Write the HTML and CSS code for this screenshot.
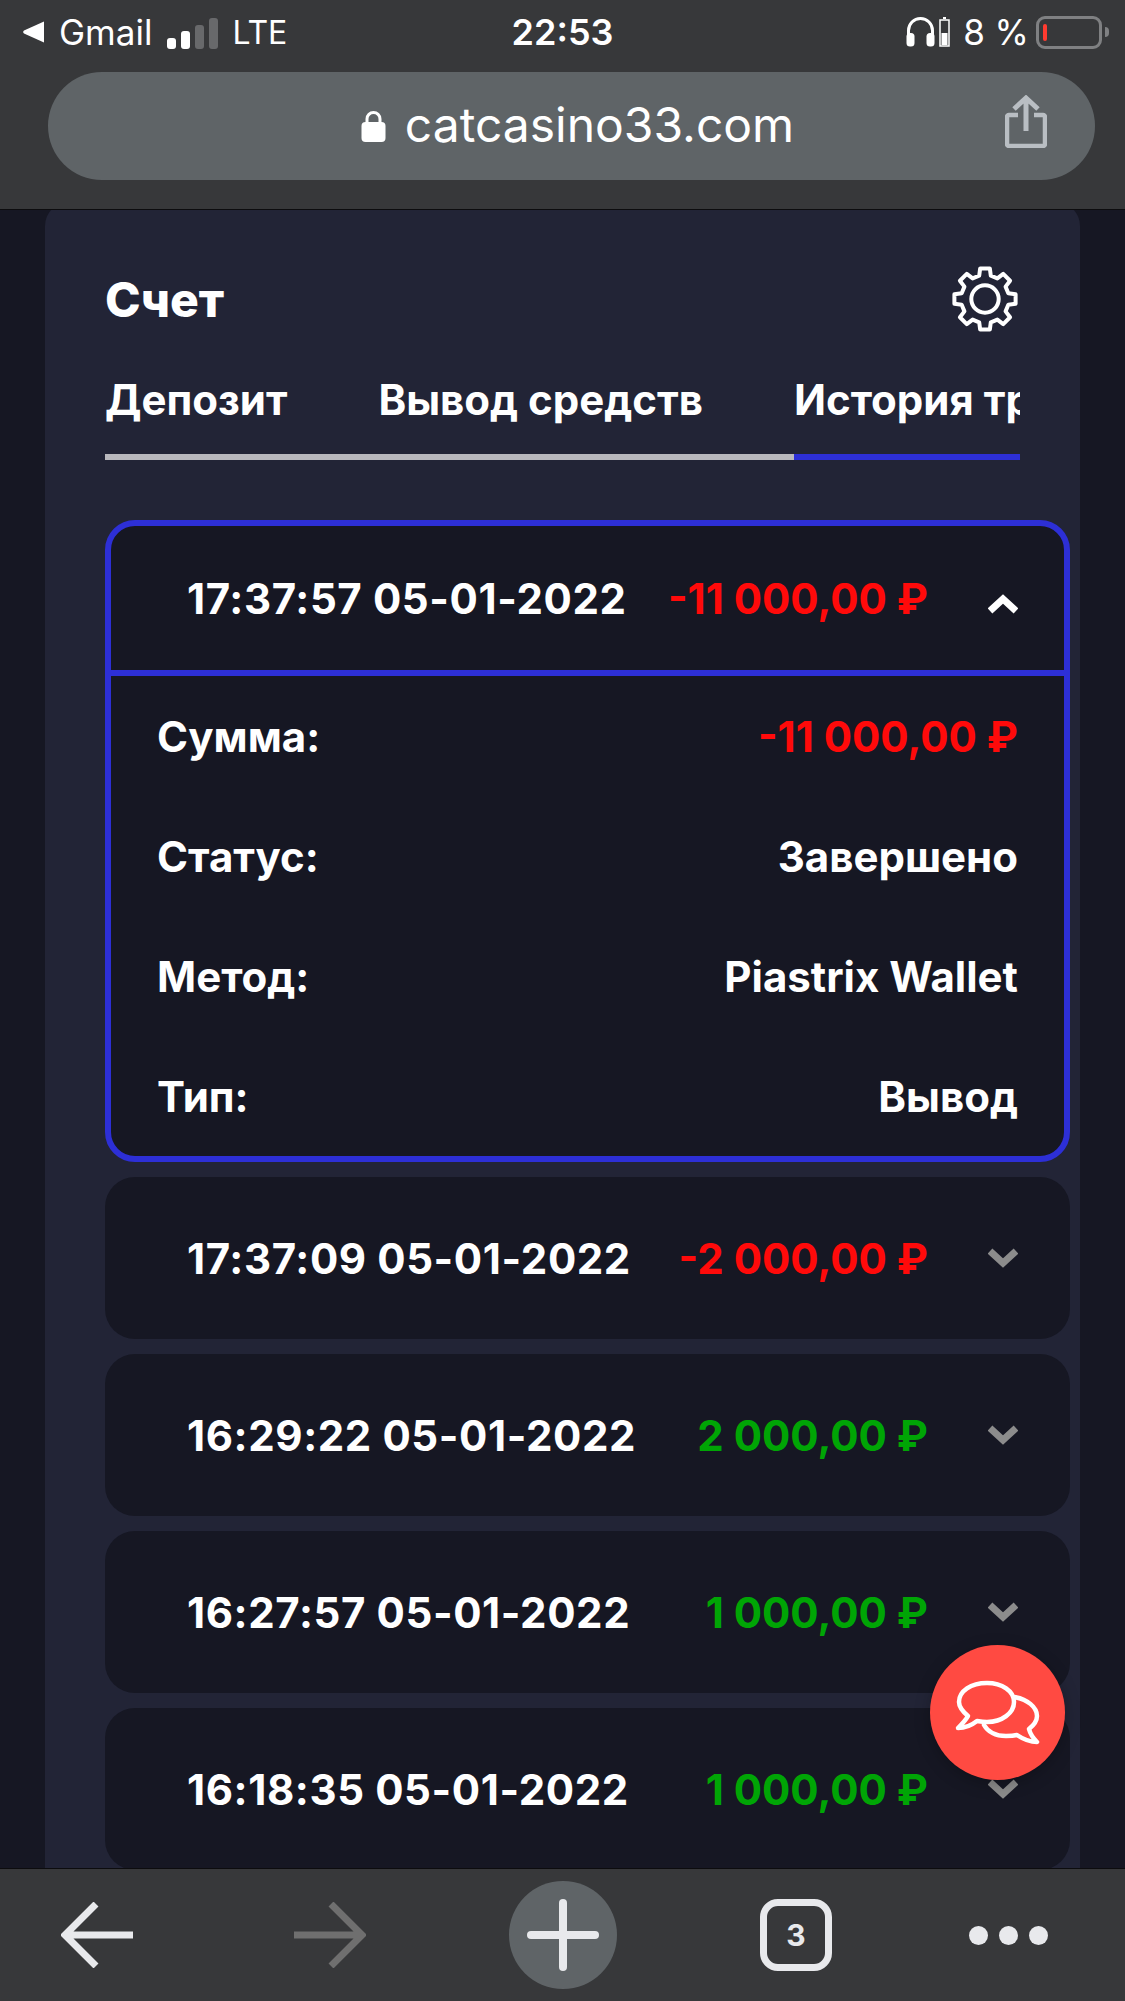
FILE: index.html
```
<!DOCTYPE html>
<html>
<head>
  <meta charset="UTF-8">
  <meta name="viewport" content="width=device-width, initial-scale=1">
  <title>catcasino33.com</title>

  <link rel="stylesheet" href="styles.css">
</head>

<body>

<header class="topbar">
  <div class="status">
    <div class="status__left">
      <svg class="status__back" width="22" height="24" viewBox="0 0 22 24"><path d="M21 1.5v21L1 13.5a2 2 0 0 1 0-3z" fill="#fff"/></svg>
      <span class="status__app">Gmail</span>
      <div class="signal">
        <span class="signal__bar signal__bar--1"></span>
        <span class="signal__bar signal__bar--2"></span>
        <span class="signal__bar signal__bar--3"></span>
        <span class="signal__bar signal__bar--4"></span>
      </div>
      <span class="status__net">LTE</span>
    </div>
    <div class="status__time">22:53</div>
    <div class="status__right">
      <svg width="29" height="30" viewBox="0 0 29 30"><path d="M2.500 21v-7.500a12 12 0 0 1 24 0V21" fill="none" stroke="#fff" stroke-width="3"/><rect x="0.500" y="16" width="8" height="13.500" rx="3.500" fill="#fff"/><rect x="20.500" y="16" width="8" height="13.500" rx="3.500" fill="#fff"/></svg>
      <svg class="status__cell" width="11" height="30" viewBox="0 0 11 30"><path d="M4 0h3v2H4z" fill="#fff"/><rect x="1" y="3" width="9" height="26" fill="none" stroke="#fff" stroke-width="1.500"/><rect x="2.500" y="16" width="6" height="12" fill="#fff"/></svg>
      <span class="status__percent">8 %</span>
      <div class="battery"><span class="battery__level"></span></div>
      <span class="battery__nub"></span>
    </div>
  </div>

  <div class="url">
    <svg width="25" height="32" viewBox="0 0 25 32"><path d="M6 14V9a6.500 6.500 0 0 1 13 0v5" fill="none" stroke="#fff" stroke-width="3"/><rect x="0.500" y="12" width="24" height="20" rx="4" fill="#fff"/></svg>
    <span class="url__text">catcasino33.com</span>
    <svg class="url__share" width="42" height="53" viewBox="0 0 42 53"><path d="M21 36V3M9 14L21 3l12 11" fill="none" stroke="#b9bec3" stroke-width="5"/><path d="M13 20H4a2 2 0 0 0-2 2v27a2 2 0 0 0 2 2h34a2 2 0 0 0 2-2V22a2 2 0 0 0-2-2h-9" fill="none" stroke="#b9bec3" stroke-width="4.500"/></svg>
  </div>
</header>

<main class="page">
  <section class="panel">
    <div class="panel__head">
      <h1 class="title">Счет</h1>
      <svg width="66" height="66" viewBox="0 0 66 66" fill="none" stroke="#fff" stroke-width="4" stroke-linejoin="round"><path d="M27.2 9.700L28.150 2.400H37.850L38.800 9.700L45.360 12.430L51.220 7.920L58.080 14.780L53.570 20.640L56.300 27.200L63.600 28.150V37.850L56.300 38.800L53.570 45.360L58.080 51.220L51.220 58.080L45.360 53.570L38.800 56.300L37.850 63.600H28.150L27.200 56.300L20.640 53.570L14.780 58.080L7.920 51.220L12.430 45.360L9.700 38.800L2.400 37.850V28.150L9.700 27.200L12.430 20.640L7.920 14.780L14.780 7.920L20.640 12.430z"/><circle cx="33" cy="33" r="13.700"/></svg>
    </div>

    <nav class="tabs">
      <a class="tabs__item">Депозит</a>
      <a class="tabs__item">Вывод средств</a>
      <a class="tabs__item tabs__item--active">История транзакций</a>
    </nav>

    <ul class="list">
      <li class="card card--open">
        <div class="card__row card__row--head">
          <span class="card__date">17:37:57 05-01-2022</span>
          <span class="card__sum text-red">-11 000,00 ₽</span>
          <svg class="chevron chevron--up" width="30" height="20" viewBox="0 0 30 20"><path d="M2 17L15 5l13 12" fill="none" stroke="#fff" stroke-width="7"/></svg>
        </div>
        <div class="details">
          <div class="details__row"><span>Сумма:</span><span class="text-red">-11 000,00 ₽</span></div>
          <div class="details__row"><span>Статус:</span><span>Завершено</span></div>
          <div class="details__row"><span>Метод:</span><span>Piastrix Wallet</span></div>
          <div class="details__row"><span>Тип:</span><span>Вывод</span></div>
        </div>
      </li>

      <li class="card">
        <div class="card__row">
          <span class="card__date">17:37:09 05-01-2022</span>
          <span class="card__sum text-red">-2 000,00 ₽</span>
          <svg class="chevron" width="30" height="20" viewBox="0 0 30 20"><path d="M2 3l13 12L28 3" fill="none" stroke="#8c8c8c" stroke-width="7"/></svg>
        </div>
      </li>
      <li class="card">
        <div class="card__row">
          <span class="card__date">16:29:22 05-01-2022</span>
          <span class="card__sum text-green">2 000,00 ₽</span>
          <svg class="chevron" width="30" height="20" viewBox="0 0 30 20"><path d="M2 3l13 12L28 3" fill="none" stroke="#8c8c8c" stroke-width="7"/></svg>
        </div>
      </li>
      <li class="card">
        <div class="card__row">
          <span class="card__date">16:27:57 05-01-2022</span>
          <span class="card__sum text-green">1 000,00 ₽</span>
          <svg class="chevron" width="30" height="20" viewBox="0 0 30 20"><path d="M2 3l13 12L28 3" fill="none" stroke="#8c8c8c" stroke-width="7"/></svg>
        </div>
      </li>
      <li class="card">
        <div class="card__row">
          <span class="card__date">16:18:35 05-01-2022</span>
          <span class="card__sum text-green">1 000,00 ₽</span>
          <svg class="chevron" width="30" height="20" viewBox="0 0 30 20"><path d="M2 3l13 12L28 3" fill="none" stroke="#8c8c8c" stroke-width="7"/></svg>
        </div>
      </li>
    </ul>
  </section>
</main>

<a class="chat">
  <svg width="135" height="135" viewBox="0 0 135 135" fill="none" stroke="#fff" stroke-width="4.500" stroke-linejoin="round" stroke-linecap="round">
    <path d="M38 71C31 65 29 60 29 57C29 46 41 38 57 38C72 38 84 46 84 57C84 68 72 77 57 77C53 77 50 76.500 47 76C42 80 35 83 28 83C32 79 36 75 38 71Z"/>
    <path d="M84 52C97 54 107 62 107 71C107 76 104 80 99 84C100 88 103 93 107 97C100 97 93 94 87 90C83 91 79 91 76 91C66 91 58 87 54 80"/>
  </svg>
</a>

<footer class="toolbar">
  <svg width="72" height="66" viewBox="0 0 72 66" fill="none" stroke="#e8e9ec" stroke-width="7"><path d="M35 2L4 33l31 31M5 33h67"/></svg>
  <svg class="toolbar__forward" width="72" height="66" viewBox="0 0 72 66" fill="none" stroke="#6f6f6f" stroke-width="7"><path d="M37 2l31 31-31 31M67 33H0"/></svg>
  <div class="toolbar__plus">
    <svg width="72" height="72" viewBox="0 0 72 72" fill="#e8e9ec"><rect x="32" y="0" width="8" height="72" rx="4"/><rect x="0" y="32" width="72" height="8" rx="4"/></svg>
  </div>
  <div class="toolbar__tabs">3</div>
  <div class="toolbar__dots"><span></span><span></span><span></span></div>
</footer>

</body>
</html>
```

FILE: styles.css
```
html,
body {
  height: 100%;
}

body {
  position: relative;
  display: flex;
  flex-direction: column;
  overflow: hidden;
  margin: 0;
  font-family: Inter, "Noto Sans", sans-serif;
  color: #fff;
  background-color: #161723;
}

.text-red { color: #ff0a0a; }
.text-green { color: #00a505; }


/* Browser top bar */

.topbar {
  flex: none;
  height: 210px;
  box-sizing: border-box;
  padding: 0 23px 0;
  background-color: #37383a;
  border-bottom: 1px solid #0c0c0e;
}

.status {
  display: grid;
  grid-template-columns: 1fr auto 1fr;
  align-items: center;
  height: 64px;
  margin-bottom: 8px;
}

.status__left,
.status__right {
  display: flex;
  align-items: center;
}

.status__right { justify-content: flex-end; margin-right: -7px; }

.status__back { margin-right: 14px; }

.status__app { font-size: 35px; }

.status__net { font-size: 32px; }

.status__time {
  font-size: 36px;
  font-weight: 600;
}

.signal {
  display: flex;
  align-items: flex-end;
  gap: 5px;
  height: 31px;
  margin: 0 14px 0 15px;
  padding-top: 2px;
}

.signal__bar {
  width: 9px;
  border-radius: 3px;
  background-color: #fff;
}
.signal__bar--1 { height: 11px; }
.signal__bar--2 { height: 18px; }
.signal__bar--3 { height: 24px; background-color: #68696b; }
.signal__bar--4 { height: 31px; background-color: #68696b; }

.status__cell { margin-left: 4px; }

.status__percent {
  margin: 0 7px 0 13px;
  font-size: 35px;
  white-space: nowrap;
}

.battery {
  width: 66px;
  height: 33px;
  box-sizing: border-box;
  padding: 5px 4px;
  border: 3px solid #7f8082;
  border-radius: 9px;
}

.battery__level {
  display: block;
  width: 4px;
  height: 100%;
  border-radius: 2px;
  background-color: #ff3b30;
}

.battery__nub {
  width: 4px;
  height: 10px;
  margin-left: 3px;
  border-radius: 0 4px 4px 0;
  background-color: #7f8082;
}

.url {
  position: relative;
  display: flex;
  align-items: center;
  justify-content: center;
  gap: 19px;
  height: 108px;
  margin: 0 7px 0 25px;
  padding-left: 12px;
  box-sizing: border-box;
  border-radius: 54px;
  background-color: #5f6467;
}

.url__text {
  margin-top: -4px;
  font-size: 48px;
}

.url__share {
  position: absolute;
  right: 48px;
  top: 23px;
}


/* Page content */

.page {
  flex: 1;
  min-height: 0;
  overflow: hidden;
}

.panel {
  margin: -8px 45px 0;
  padding: 64px 10px 40px 60px;
  border-radius: 24px;
  background-color: #222436;
}

.panel__head {
  display: flex;
  align-items: center;
  justify-content: space-between;
  margin: 0 52px 42px 0;
}

.title {
  margin: 0;
  font-size: 48px;
  font-weight: 800;
}

.tabs {
  display: flex;
  gap: 91px;
  overflow: hidden;
  margin-right: 50px;
  box-shadow: inset 0 -6px 0 #b9b8bd;
}

.tabs__item {
  flex: none;
  padding-bottom: 28px;
  font-size: 42px;
  font-weight: 700;
  line-height: 52px;
  white-space: nowrap;
  border-bottom: 6px solid transparent;
}

.tabs__item--active { border-bottom-color: #2d2fd6; }


/* Transactions */

.list {
  margin: 60px 0 0;
  padding: 0;
  list-style: none;
}

.card {
  margin-bottom: 15px;
  border-radius: 30px;
  background-color: #161723;
}

.card--open {
  border: 6px solid #2d2fd6;
}

.card__row {
  display: flex;
  align-items: center;
  height: 162px;
  padding: 0 52px 0 82px;
  font-size: 42px;
  font-weight: 700;
}

.card__row--head {
  height: 144px;
  padding: 0 46px 0 76px;
  border-bottom: 6px solid #2d2fd6;
}

.card__date { letter-spacing: .6px; }

.card__sum {
  margin-left: auto;
  white-space: nowrap;
}

.chevron { margin-left: 60px; }

.chevron--up { margin-top: 12px; }

.details__row {
  display: flex;
  align-items: center;
  justify-content: space-between;
  height: 120px;
  padding: 0 46px 0 46px;
  font-size: 42px;
  font-weight: 700;
}


/* Floating chat button */

.chat {
  position: absolute;
  right: 60px;
  bottom: 221px;
  width: 135px;
  height: 135px;
  border-radius: 50%;
  background-color: #ff4a42;
  box-shadow: 0 4px 16px rgba(0,0,0,.25);
}

.chat svg { display: block; }


/* Browser bottom bar */

.toolbar {
  flex: none;
  display: flex;
  align-items: center;
  gap: 143px;
  height: 133px;
  box-sizing: border-box;
  padding-left: 61px;
  background-color: #37383a;
  border-top: 1px solid #0c0c0e;
}

.toolbar__forward { margin-left: 18px; }

.toolbar__plus {
  display: flex;
  align-items: center;
  justify-content: center;
  width: 108px;
  height: 108px;
  border-radius: 50%;
  background-color: #5f6467;
}

.toolbar__tabs {
  display: flex;
  align-items: center;
  justify-content: center;
  width: 72px;
  height: 72px;
  box-sizing: border-box;
  font-size: 30px;
  font-weight: 700;
  color: #e8e9ec;
  border: 7px solid #e8e9ec;
  border-radius: 18px;
}

.toolbar__dots {
  display: flex;
  gap: 11px;
  margin-left: -6px;
}

.toolbar__dots span {
  width: 19px;
  height: 19px;
  border-radius: 50%;
  background-color: #e8e9ec;
}
```
